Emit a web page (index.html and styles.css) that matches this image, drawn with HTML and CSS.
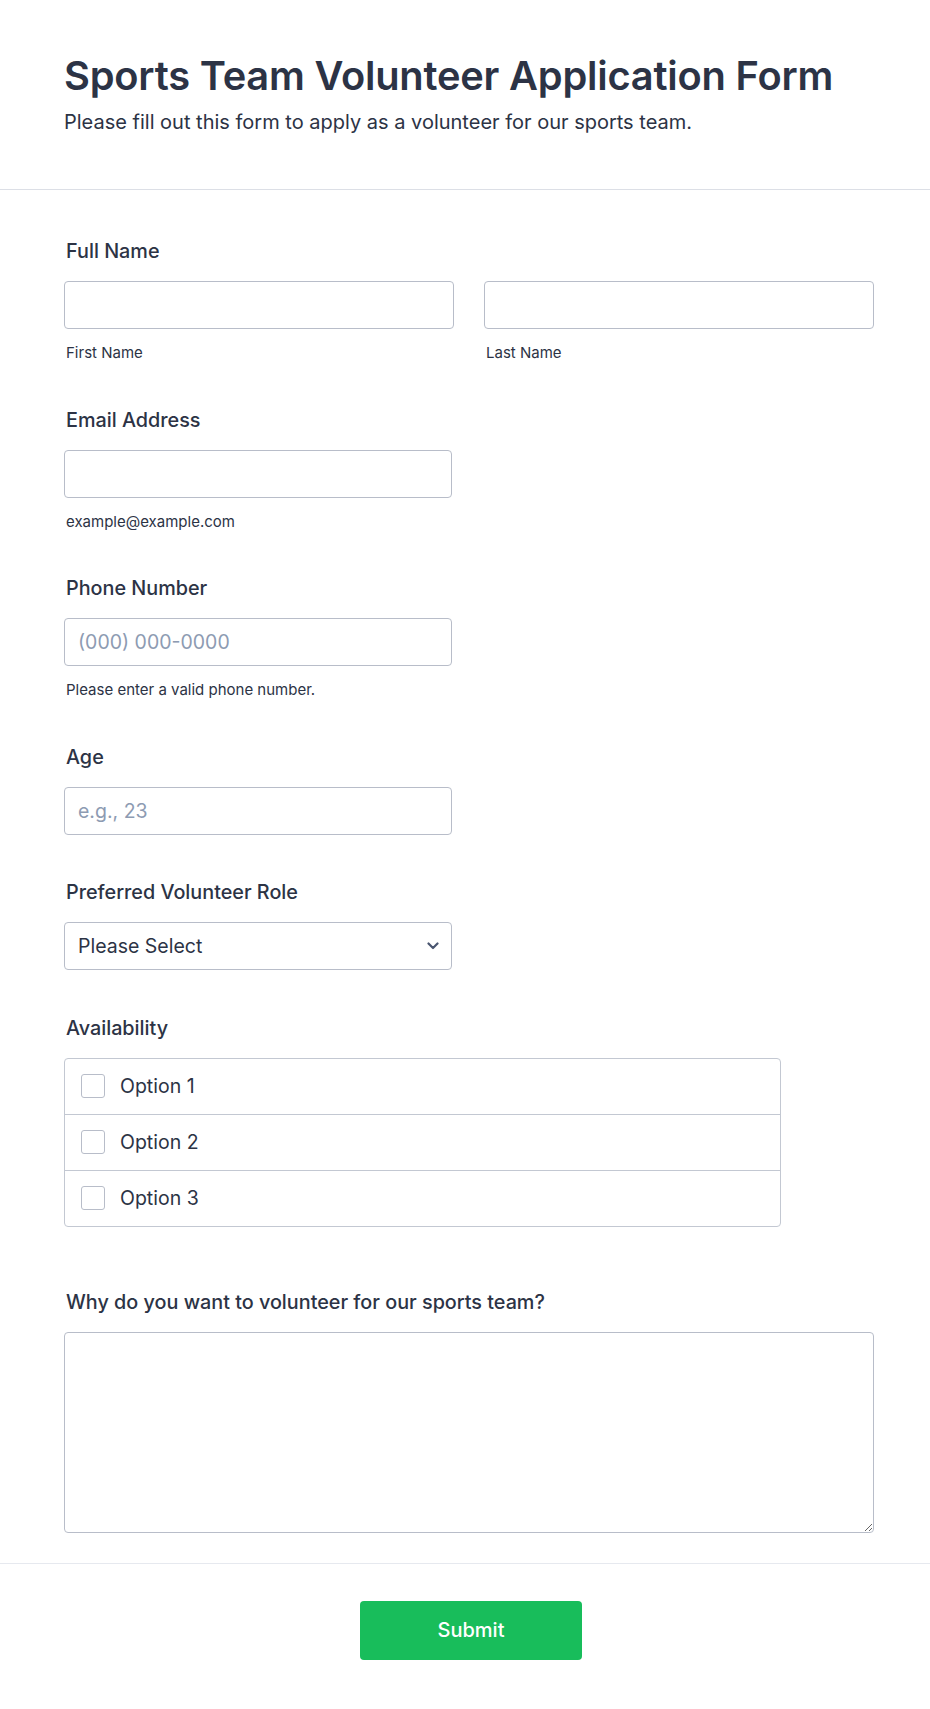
FILE: index.html
```html
<!DOCTYPE html>
<html lang="en">
<head>
<meta charset="utf-8">
<title>Sports Team Volunteer Application Form</title>
<link rel="stylesheet" href="styles.css">
</head>
<body>
<form class="form">
  <header class="form-header">
    <h1 class="form-title">Sports Team Volunteer Application Form</h1>
    <p class="form-subtitle">Please fill out this form to apply as a volunteer for our sports team.</p>
  </header>

  <div class="form-list">
    <div class="field">
      <label class="field-label">Full Name</label>
      <div class="name-row">
        <div class="name-col">
          <input class="text-input" type="text">
          <span class="sublabel">First Name</span>
        </div>
        <div class="name-col">
          <input class="text-input" type="text">
          <span class="sublabel">Last Name</span>
        </div>
      </div>
    </div>

    <div class="field">
      <label class="field-label">Email Address</label>
      <div class="half">
        <input class="text-input" type="email">
        <span class="sublabel">example@example.com</span>
      </div>
    </div>

    <div class="field">
      <label class="field-label">Phone Number</label>
      <div class="half">
        <input class="text-input" type="tel" placeholder="(000) 000-0000">
        <span class="sublabel">Please enter a valid phone number.</span>
      </div>
    </div>

    <div class="field">
      <label class="field-label">Age</label>
      <div class="half">
        <input class="text-input" type="text" placeholder="e.g., 23">
      </div>
    </div>

    <div class="field">
      <label class="field-label">Preferred Volunteer Role</label>
      <div class="half select-wrap">
        <select class="select-input">
          <option>Please Select</option>
        </select>
        <svg class="chevron" width="12" height="8" viewBox="0 0 12 8" aria-hidden="true">
          <path d="M1.5 1.5 L6 6 L10.5 1.5" fill="none" stroke="#4a5670" stroke-width="2.2" stroke-linecap="round" stroke-linejoin="round"/>
        </svg>
      </div>
    </div>

    <div class="field field-checks">
      <label class="field-label">Availability</label>
      <div class="check-group">
        <label class="check-row"><span class="check-box"></span><span class="check-text">Option 1</span></label>
        <label class="check-row"><span class="check-box"></span><span class="check-text">Option 2</span></label>
        <label class="check-row"><span class="check-box"></span><span class="check-text">Option 3</span></label>
      </div>
    </div>

    <div class="field">
      <label class="field-label">Why do you want to volunteer for our sports team?</label>
      <textarea class="text-area"></textarea>
    </div>
  </div>

  <div class="form-footer">
    <button class="submit-btn" type="button">Submit</button>
  </div>
</form>
</body>
</html>
```
FILE: styles.css
```css
* { box-sizing: border-box; }

html, body {
  margin: 0;
  padding: 0;
  background: #ffffff;
}

body {
  font-family: Inter, "Noto Sans", "Liberation Sans", sans-serif;
  color: #2c3345;
}

.form {
  width: 930px;
}

.form-header {
  padding: 53px 56px 53px 64px;
  border-bottom: 1px solid #dcdfe6;
}

.form-title {
  margin: 0;
  font-size: 39.8px;
  line-height: 46px;
  font-weight: 600;
  color: #2c3345;
  letter-spacing: -0.2px;
}

.form-subtitle {
  margin: 10px 0 0;
  font-size: 20px;
  line-height: 27px;
  font-weight: 400;
  color: #2c3345;
}

.form-list {
  padding: 49px 56px 30px 64px;
  display: flex;
  flex-direction: column;
  gap: 45.5px;
}

.field {
  display: flex;
  flex-direction: column;
}

.field-label {
  font-size: 19.8px;
  line-height: 24px;
  font-weight: 500;
  color: #2c3345;
  padding-left: 2px;
  margin-bottom: 18px;
}

.name-row {
  display: flex;
  gap: 30px;
}

.name-col,
.half {
  width: 390px;
  display: flex;
  flex-direction: column;
}

.half { width: 388px; }

.text-input,
.select-input {
  width: 100%;
  height: 48px;
  border: 1px solid #b8bdc9;
  border-radius: 4px;
  background: #ffffff;
  padding: 0 13px;
  font-family: inherit;
  font-size: 19.5px;
  color: #2c3345;
  outline: none;
}

.text-input::placeholder {
  color: #8d9bb2;
  opacity: 1;
}

.sublabel {
  margin-top: 15px;
  padding-left: 2px;
  font-size: 15px;
  line-height: 18px;
  color: #2c3345;
}

.select-wrap {
  position: relative;
}

.select-input {
  appearance: none;
  -webkit-appearance: none;
  padding-right: 40px;
}

.chevron {
  position: absolute;
  right: 13px;
  top: 20px;
}

.field-checks {
  margin-bottom: 17.5px;
}

.check-group {
  width: 717px;
  border: 1px solid #c3c8d2;
  border-radius: 4px;
  display: flex;
  flex-direction: column;
}

.check-row {
  height: 56px;
  display: flex;
  align-items: center;
  padding-left: 16px;
  border-top: 1px solid #c3c8d2;
}

.check-row:first-child {
  border-top: none;
  height: 55px;
}

.check-box {
  width: 24px;
  height: 24px;
  border: 1px solid #b8bdc9;
  border-radius: 3px;
  background: #ffffff;
  flex: none;
}

.check-text {
  margin-left: 15px;
  font-size: 19.5px;
  line-height: 24px;
  color: #2c3345;
}

.text-area {
  width: 810px;
  height: 201px;
  border: 1px solid #b8bdc9;
  border-radius: 4px;
  padding: 10px 13px;
  font-family: inherit;
  font-size: 19.5px;
  color: #2c3345;
  outline: none;
  display: block;
}

.form-footer {
  border-top: 1px solid #e6e9ef;
  padding: 37px 56px 50px 64px;
  display: flex;
  justify-content: center;
}

.submit-btn {
  width: 222px;
  height: 59px;
  margin-left: 4px;
  border: none;
  border-radius: 4px;
  background: #18bd5b;
  color: #ffffff;
  font-family: inherit;
  font-size: 20px;
  font-weight: 500;
  cursor: pointer;
}
```
